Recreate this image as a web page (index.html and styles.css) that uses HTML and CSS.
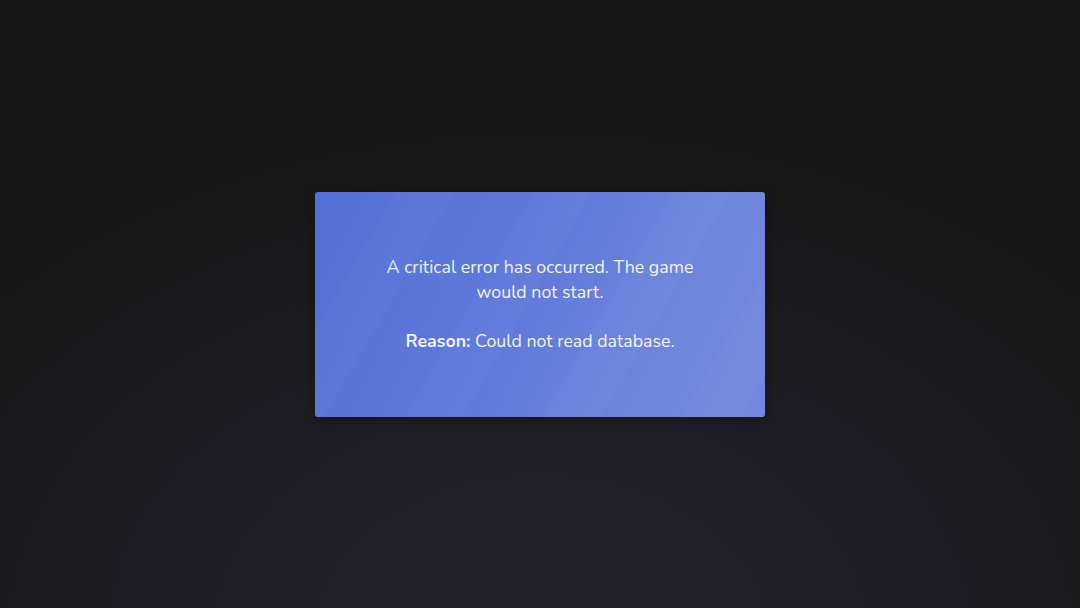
FILE: index.html
```html
<!DOCTYPE html>
<html lang="en">
<head>
<meta charset="utf-8">
<title>Critical error</title>
<link rel="stylesheet" href="styles.css">
</head>
<body>
<main class="screen">
  <section class="error-card">
    <p class="message">A critical error has occurred. The game would not start.</p>
    <p class="reason"><strong>Reason:</strong> Could not read database.</p>
  </section>
</main>
</body>
</html>
```

FILE: styles.css
```css
html, body {
  margin: 0;
  padding: 0;
  width: 100%;
  height: 100%;
}

body {
  font-family: Nunito, Lato, "Open Sans", sans-serif;
  background: #171717;
}

.screen {
  width: 1080px;
  height: 608px;
  display: flex;
  align-items: center;
  justify-content: center;
  background: radial-gradient(ellipse 780px 540px at 50% 104%, #25242e 0%, #222129 20%, #1f1e25 42%, #1c1b20 65%, #19191a 85%, #171717 100%);
}

.error-card {
  box-sizing: border-box;
  width: 450px;
  height: 225px;
  margin-top: 1px;
  padding: 0 55px;
  border-radius: 3px;
  display: flex;
  flex-direction: column;
  justify-content: center;
  align-items: center;
  text-align: center;
  color: rgba(255, 255, 255, 0.92);
  font-size: 17.8px;
  line-height: 25px;
  background:
    repeating-linear-gradient(120deg, rgba(255,255,255,0) 0px, rgba(255,255,255,0) 70px, rgba(255,255,255,0.025) 70px, rgba(255,255,255,0.025) 120px),
    linear-gradient(115deg, #536fd8 0%, #6079da 45%, #6f85dc 75%, #7489de 100%);
  box-shadow: 0 2px 12px rgba(0, 0, 0, 0.35);
}

.message {
  margin: 0 0 24px;
  max-width: 330px;
}

.reason {
  margin: 0;
}

.reason strong {
  font-weight: 700;
}
```
